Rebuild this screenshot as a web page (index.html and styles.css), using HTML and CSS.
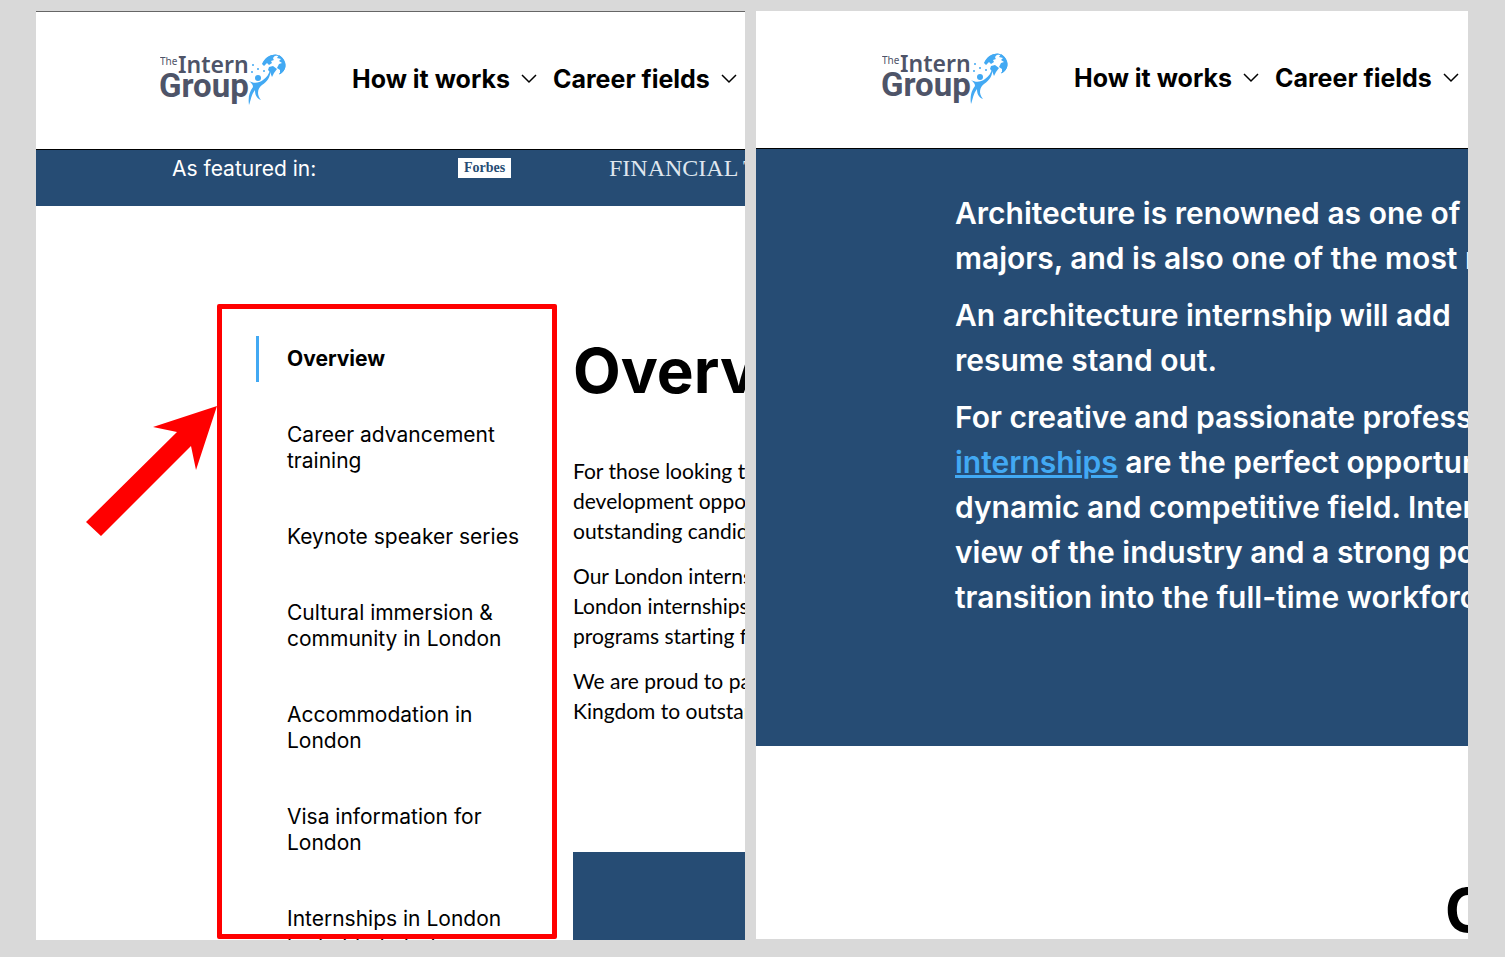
FILE: index.html
```html
<!DOCTYPE html>
<html lang="en">
<head>
<meta charset="utf-8">
<title>The Intern Group</title>
<link rel="stylesheet" href="styles.css">
</head>
<body>
<svg class="defs" aria-hidden="true">
  <symbol id="logo" viewBox="0 0 126 54">
    <g fill="#4e5468">
      <text x="0" y="11" font-family="Noto Sans, sans-serif" font-size="10">The</text>
      <text x="18" y="19" font-family="Noto Sans, sans-serif" font-size="23" font-weight="600">Intern</text>
      <text x="-1" y="43" font-family="Roboto, sans-serif" font-size="33" font-weight="700">Group</text>
    </g>
    <g fill="#42a9f3">
      <path d="M102 10C105 3 111 0 117 1C114 2 112 4 114 6L111 7L112 9L109 11L107 9L104 12ZM119 1C124 4 126 9 125 14C124 17 122 19 120 20L120 16L117 14L119 10L122 9L119 7L121 5L117 4ZM109 13L113 12L117 15L114 19L112 23L110 18L108 16Z"/>
      <path d="M103 10C106 3 112 1 116 1C122 2 126 8 125 13C124 17 122 19 119 20" fill="none" stroke="#42a9f3" stroke-width="1"/>
      <circle cx="98" cy="24" r="3"/>
      <circle cx="93" cy="11" r="1"/><circle cx="98" cy="15" r="1"/><circle cx="92" cy="18" r="1"/><circle cx="104" cy="17" r="1"/>
      <path d="M89 27C94 30 99 29 103 26C107 23 109 20 110 16C111 22 108 27 102 31C98 34 96 40 101 46C96 44 95 40 95 36C91 41 91 46 89 51C88 44 89 38 93 33C93 30 91 29 89 27Z"/>
    </g>
  </symbol>
  <symbol id="chevron" viewBox="0 0 16 10">
    <path d="M1 1L8 8L15 1" fill="none" stroke="#000" stroke-width="1.5"/>
  </symbol>
</svg>
<main class="board">
  <section class="pane pane-guide">
    <header class="topbar">
      <a class="brand" href="#" aria-label="The Intern Group"><svg><use href="#logo"/></svg></a>
      <nav class="menu">
        <button type="button">How it works <svg><use href="#chevron"/></svg></button>
        <button type="button">Career fields <svg><use href="#chevron"/></svg></button>
      </nav>
    </header>
    <div class="featured">
      <span class="featured-label">As featured in:</span>
      <span class="forbes">Forbes</span>
      <span class="ft">FINANCIAL TIMES</span>
    </div>
    <div class="guide">
      <nav class="toc">
        <a class="active" href="#overview">Overview</a>
        <a href="#">Career advancement<br>training</a>
        <a href="#">Keynote speaker series</a>
        <a href="#">Cultural immersion &amp;<br>community in London</a>
        <a href="#">Accommodation in<br>London</a>
        <a href="#">Visa information for<br>London</a>
        <a href="#">Internships in London<br>by field of study</a>
      </nav>
      <article class="article">
        <h1 id="overview">Overview</h1>
        <p>For those looking to<br>development opportunities<br>outstanding candidates</p>
        <p>Our London internships<br>London internships<br>programs starting from</p>
        <p>We are proud to partner<br>Kingdom to outstanding</p>
        <div class="media"></div>
      </article>
    </div>
    <div class="highlight"></div>
    <svg class="arrow" viewBox="0 0 132 131" aria-hidden="true"><path d="M131 0L67 21L91 26L0 116L15 130L105 40L110 64Z" fill="red"/></svg>
  </section>
  <section class="pane pane-field">
    <header class="topbar">
      <a class="brand" href="#" aria-label="The Intern Group"><svg><use href="#logo"/></svg></a>
      <nav class="menu">
        <button type="button">How it works <svg><use href="#chevron"/></svg></button>
        <button type="button">Career fields <svg><use href="#chevron"/></svg></button>
      </nav>
    </header>
    <div class="hero">
      <p>Architecture is renowned as one of<br>majors, and is also one of the most rewarding</p>
      <p>An architecture internship will add<br>resume stand out.</p>
      <p>For creative and passionate professionals<br><a href="#">internships</a> are the perfect opportunity<br>dynamic and competitive field. Interns<br>view of the industry and a strong portfolio<br>transition into the full-time workforce</p>
    </div>
    <h2>O</h2>
  </section>
</main>
</body>
</html>
```
FILE: styles.css
```css
* { box-sizing: border-box; }
body { margin: 0; background: #d9d9d9; color: #000; font-family: Inter, sans-serif; }
.defs { display: none; }
.board {
  display: grid;
  grid-template-columns: 709fr 712fr;
  gap: 11px;
  height: 100vh;
  padding: 11px 37px 17px 36px;
}
.pane { position: relative; min-width: 0; overflow: hidden; background: #fff; white-space: nowrap; }
.pane-guide { border-top: 1px solid #666; }
.pane-field { margin-bottom: 1px; }

.topbar { display: flex; align-items: center; gap: 66px; height: 138px; padding-left: 124px; border-bottom: 1px solid #000; }
.pane-field .topbar { padding-left: 126px; }
.brand { flex: none; }
.brand svg { display: block; width: 126px; height: 54px; overflow: visible; }
.menu { display: flex; gap: 16px; padding-bottom: 4px; }
.menu button { display: flex; align-items: center; gap: 11px; padding: 0; border: 0; background: none; color: #000; font: 700 25px/28px Inter, sans-serif; white-space: nowrap; }
.menu svg { width: 16px; height: 10px; }

.featured { display: flex; align-items: center; height: 56px; padding: 0 0 20px 136px; background: #264c74; color: #fff; font-size: 21px; }
.featured-label { flex: none; width: 286px; }
.forbes { flex: none; width: 53px; margin-right: 98px; background: #fff; color: #264c74; font: 700 14px/20px "Liberation Serif", serif; text-align: center; }
.ft { color: #dfe6ee; font: 24px/24px "Liberation Serif", serif; }

.guide { display: grid; grid-template-columns: 317px 1fr; padding: 130px 0 0 220px; }
.toc { display: flex; flex-direction: column; gap: 30px; }
.toc a { padding: 10px 0 10px 28px; border-left: 3px solid transparent; color: #000; font-size: 21px; line-height: 26px; text-decoration: none; }
.toc .active { border-color: #42a9f3; font-weight: 700; }
.article { min-width: 0; }
.article h1 { margin: 0 0 50px; font-size: 62px; line-height: 70px; }
.article p { margin: 0 0 15px; font: 21px/30px Lato, sans-serif; font-variant-ligatures: none; }
.article .media { height: 300px; margin-top: 126px; background: #264c74; }

.highlight { position: absolute; top: 292px; bottom: 1px; left: 181px; width: 340px; border: 5px solid red; border-radius: 2px; }
.arrow { position: absolute; top: 394px; left: 50px; width: 132px; height: 131px; }

.hero { padding: 42px 0 114px 199px; background: #264c74; color: #fff; font: 600 30px/45px Inter, sans-serif; }
.hero p { margin: 0 0 12px; }
.hero a { color: #42a9f3; }
.pane-field h2 { margin: 129px 0 0 689px; font-size: 60px; line-height: 70px; }
```
